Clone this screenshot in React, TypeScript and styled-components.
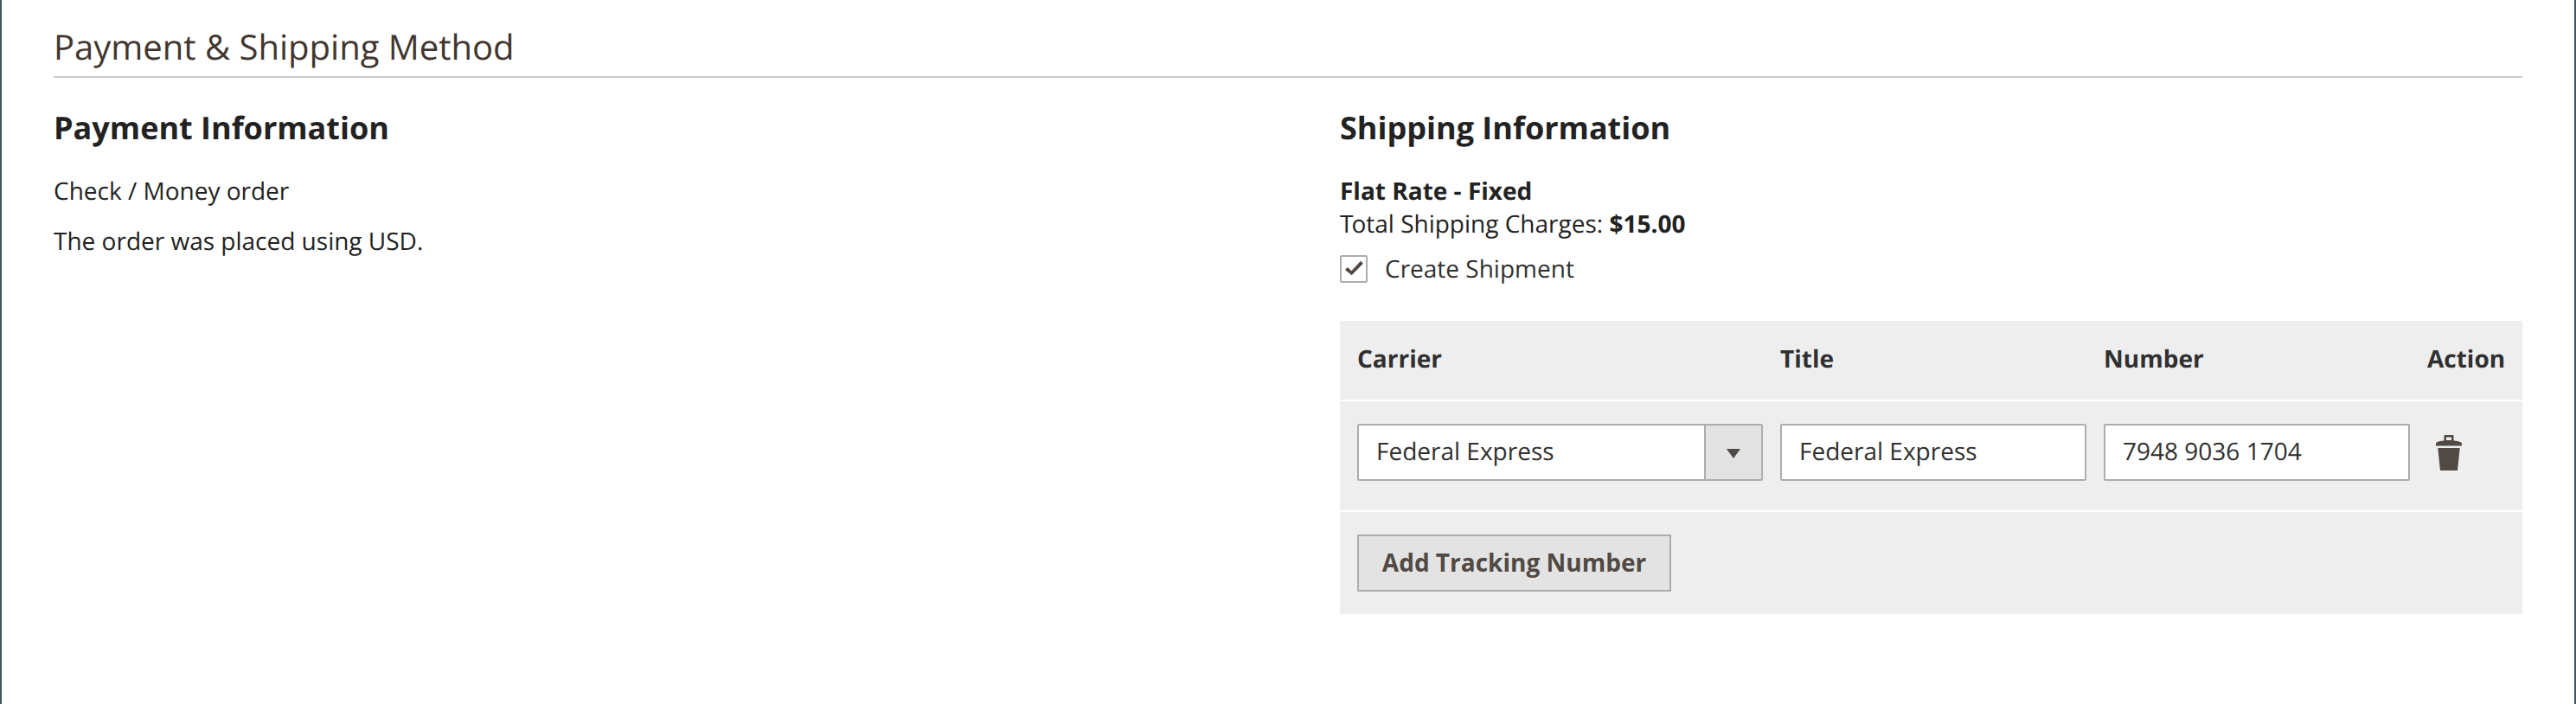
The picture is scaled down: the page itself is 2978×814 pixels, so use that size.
import React from 'react';
import styled, { createGlobalStyle } from 'styled-components';

const GlobalStyle = createGlobalStyle`
  *, *::before, *::after { box-sizing: border-box; }
  body {
    margin: 0;
    background: #fff;
    color: #222;
    font: 400 28px/38px 'Open Sans', 'Noto Sans', sans-serif;
    text-rendering: geometricPrecision;
  }
`;

const Page = styled.main`
  height: 814px;
  padding: 26px 60px 0;
  border: solid #41565f;
  border-width: 0 2px;
  overflow: hidden;
`;

const SectionTitle = styled.h1`
  height: 64px;
  margin: 0;
  border-bottom: 2px solid #cacaca;
  color: #41362f;
  font-size: 40px;
  font-weight: 400;
  line-height: 55px;
`;

const Columns = styled.div`
  display: grid;
  grid-template-columns: 1367px 1367px;
  justify-content: space-between;
  padding-top: 33px;
`;

const BlockTitle = styled.h2`
  margin: 0 0 30px;
  font-size: 36px;
  font-weight: 700;
  line-height: 49px;
`;

const Paragraph = styled.p`
  margin: 0 0 20px;
`;

const Strong = styled.strong`
  font-weight: 700;
`;

const ShippingCharges = styled.div`
  /* tighten the "To" pair */
  &::first-letter { letter-spacing: -2px; }
`;

const CheckField = styled.label`
  display: flex;
  align-items: center;
  gap: 20px;
  margin: 14px 0 41px;
  color: #303030;
`;

const CheckBox = styled.span`
  width: 32px;
  height: 32px;
  border: 2px solid #adadad;
  border-radius: 2px;
  background: #fff;

  svg { display: block; }
`;

const Table = styled.div`
  display: grid;
  gap: 2px;
  color: #303030;
`;

const Row = styled.div<{ $pad: string }>`
  display: grid;
  grid-template-columns: 469px 354px 354px 90px;
  column-gap: 20px;
  padding: ${(p) => p.$pad};
  background: #eee;
`;

const HeadCell = styled.div`
  font-weight: 700;
`;

const Field = styled.div`
  display: flex;
  height: 66px;
  padding-left: 20px;
  border: 2px solid #adadad;
  border-radius: 2px;
  background: #fff;
  line-height: 60px;
`;

const SelectField = styled(Field)`
  justify-content: space-between;
`;

const SelectArrow = styled.span`
  display: flex;
  align-items: center;
  justify-content: center;
  width: 66px;
  padding-top: 3px;
  border-left: 2px solid #adadad;
  background: #e3e3e3;
`;

const DeleteButton = styled.button`
  height: 66px;
  padding: 1px 0 0 10px;
  border: 0;
  background: none;
  text-align: left;

  svg { display: block; }
`;

const AddButton = styled.button`
  width: 363px;
  height: 66px;
  padding: 0 0 2px;
  border: 2px solid #adadad;
  background: #e3e3e3;
  color: #514943;
  font: inherit;
  font-weight: 700;
  white-space: nowrap;
`;

const CheckIcon = () => (
  <svg width="28" height="28" viewBox="0 0 28 28">
    <path d="M4 15 6.9 12.100 11.400 16.200 22 4.800 24.900 7.700 11.600 21.200Z" fill="#514943" />
  </svg>
);

const ArrowIcon = () => (
  <svg width="16" height="11" viewBox="0 0 16 11">
    <path d="M0 0h16L8 11Z" fill="#514943" />
  </svg>
);

const TrashIcon = () => (
  <svg width="30" height="41" viewBox="0 0 30 41">
    <path
      fill="#514943"
      fillRule="evenodd"
      d="M10.5 0h9q1 0 1 1v5.5q6 .6 8.6 2 .9.5.9 1.500v2.500H0V10q0-1 .9-1.500Q3.500 7.100 9.500 6.500V1q0-1 1-1ZM12 2.500v3.500h6V2.500Z"
    />
    <path fill="#514943" d="M2.300 15h25.400L25 41H5Z" />
  </svg>
);

export default function App() {
  return (
    <>
      <GlobalStyle />
      <Page>
        <SectionTitle>Payment &amp; Shipping Method</SectionTitle>
        <Columns>
          <section>
            <BlockTitle>Payment Information</BlockTitle>
            <Paragraph>Check / Money order</Paragraph>
            <Paragraph>The order was placed using USD.</Paragraph>
          </section>
          <section>
            <BlockTitle>Shipping Information</BlockTitle>
            <div>
              <Strong>Flat Rate - Fixed</Strong>
            </div>
            <ShippingCharges>
              Total Shipping Charges: <Strong>$15.00</Strong>
            </ShippingCharges>
            <CheckField>
              <CheckBox>
                <CheckIcon />
              </CheckBox>
              Create Shipment
            </CheckField>
            <Table>
              <Row $pad="25px 20px 28px">
                <HeadCell>Carrier</HeadCell>
                <HeadCell>Title</HeadCell>
                <HeadCell>Number</HeadCell>
                <HeadCell>Action</HeadCell>
              </Row>
              <Row $pad="26px 20px 34px">
                <SelectField>
                  Federal Express
                  <SelectArrow>
                    <ArrowIcon />
                  </SelectArrow>
                </SelectField>
                <Field>Federal Express</Field>
                <Field>7948 9036 1704</Field>
                <DeleteButton aria-label="Delete">
                  <TrashIcon />
                </DeleteButton>
              </Row>
              <Row $pad="26px 20px">
                <AddButton>Add Tracking Number</AddButton>
              </Row>
            </Table>
          </section>
        </Columns>
      </Page>
    </>
  );
}
